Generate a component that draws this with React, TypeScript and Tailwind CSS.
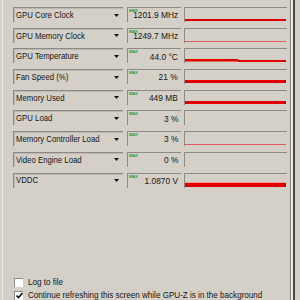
/**
 * GPU-Z "Sensors" tab, cropped.
 *
 * Each row is a sensor picker (combo), a readout box with the little
 * green MAX tag, and a sparkline box that draws the history at the bottom.
 * The original UI font is narrower than Arial, so text is squeezed a bit.
 */

type Trace =
  | { kind: 'none' }
  | { kind: 'bar'; h: number; color?: string; top?: string }
  | { kind: 'step'; at: number; left: number; right: number };

interface SensorRow {
  label: string;
  value: string;
  trace: Trace;
}

const rows: SensorRow[] = [
  { label: 'GPU Core Clock', value: '1201.9 MHz', trace: { kind: 'bar', h: 2 } },
  { label: 'GPU Memory Clock', value: '1249.7 MHz', trace: { kind: 'bar', h: 1, color: '#e25a5a' } },
  { label: 'GPU Temperature', value: '44.0 °C', trace: { kind: 'step', at: 53, left: 2.5, right: 2 } },
  { label: 'Fan Speed (%)', value: '21 %', trace: { kind: 'bar', h: 3 } },
  { label: 'Memory Used', value: '449 MB', trace: { kind: 'bar', h: 3 } },
  { label: 'GPU Load', value: '3 %', trace: { kind: 'none' } },
  { label: 'Memory Controller Load', value: '3 %', trace: { kind: 'bar', h: 1, color: '#e25a5a' } },
  { label: 'Video Engine Load', value: '0 %', trace: { kind: 'none' } },
  { label: 'VDDC', value: '1.0870 V', trace: { kind: 'bar', h: 5, top: '#f29a9a' } },
];

const RED = '#e00000';

// Sparkline interior is 101 x 13 (box is 103 x 15 with a 1px sunken border).
function Graph({ trace }: { trace: Trace }) {
  const W = 101;
  const H = 13;
  return (
    <div className="w-[103px] h-[15px] border-t border-l border-[#8d8a85] border-b-white border-r-white">
      <svg width={W} height={H} className="block">
        {trace.kind === 'bar' && (
          <>
            <rect x={0} y={H - trace.h} width={W} height={trace.h} fill={trace.color ?? RED} />
            {trace.top && <rect x={0} y={H - trace.h} width={W} height={1} fill={trace.top} />}
          </>
        )}
        {trace.kind === 'step' && (
          <>
            <rect x={0} y={H - trace.left - 0.5} width={trace.at} height={trace.left} fill={RED} />
            <rect x={trace.at} y={H - trace.right} width={W - trace.at} height={trace.right} fill={RED} />
          </>
        )}
      </svg>
    </div>
  );
}

function Row({ row }: { row: SensorRow }) {
  return (
    <div className="flex h-[15px]">
      {/* sensor picker */}
      <div className="w-[110px] h-full flex items-center pl-[2px] pr-[4px] border-t border-l border-[#8d8a85] border-b-white border-r-white shadow-[inset_1px_1px_0_#bdb9b2]">
        <div className="flex-1 min-w-0">
          <span className="inline-block origin-left scale-x-[0.82] leading-none whitespace-nowrap">{row.label}</span>
        </div>
        <svg width="5" height="3" className="block shrink-0">
          <polygon points="0,0 5,0 2.5,3" fill="#111" />
        </svg>
      </div>

      {/* readout */}
      <div className="relative w-[54px] h-full ml-[4px] flex items-center justify-end pr-[3px] border-t border-l border-[#8d8a85] border-b-white border-r-white">
        <span className="absolute left-[1px] top-[1px] text-[4px] leading-none text-[#1d9a2a] font-bold tracking-tight">MAX</span>
        <span className="inline-block origin-right scale-x-[0.88] leading-none whitespace-nowrap">{row.value}</span>
      </div>

      <div className="ml-[3px]">
        <Graph trace={row.trace} />
      </div>
    </div>
  );
}

function CheckBox({ checked }: { checked?: boolean }) {
  return (
    <div className="w-[9px] h-[9px] shrink-0 bg-white border-t border-l border-[#8d8a85] border-b-[#e8e6e2] border-r-[#e8e6e2] flex items-center justify-center">
      {checked && (
        <svg width="7" height="7" viewBox="0 0 7 7" className="block">
          <polyline points="0.5,3.5 2.5,5.5 6.5,1" fill="none" stroke="#111" strokeWidth="1.6" />
        </svg>
      )}
    </div>
  );
}

export default function App() {
  return (
    <div
      className="w-[300px] h-[300px] overflow-hidden bg-[#d4d0c8] flex text-[9.5px] text-[#161616]"
      style={{ fontFamily: '"Liberation Sans", Arial, sans-serif' }}
    >
      {/* tab page left edge */}
      <div className="ml-[2px] w-px bg-[#ebe9e4]" />

      <div className="w-[274px] ml-[10px] pt-[7px] flex flex-col">
        <div className="flex flex-col gap-[5.7px]">
          {rows.map((r) => (
            <Row key={r.label} row={r} />
          ))}
        </div>

        <div className="mt-[90px] ml-[1px] flex flex-col gap-[4px]">
          <label className="flex items-center gap-[5px] h-[9px]">
            <CheckBox />
            <span className="inline-block origin-left scale-x-[0.85] leading-none">Log to file</span>
          </label>
          <label className="flex items-center gap-[5px] h-[9px]">
            <CheckBox checked />
            <span className="inline-block origin-left scale-x-[0.85] leading-none whitespace-nowrap">
              Continue refreshing this screen while GPU-Z is in the background
            </span>
          </label>
        </div>
      </div>

      {/* right edge of the tab page / window frame */}
      <div className="ml-[3px] w-px bg-[#8a8782]" />
      <div className="w-[2px] bg-[#eceae6]" />
      <div className="w-[2px] bg-[#4a4845]" />
    </div>
  );
}
